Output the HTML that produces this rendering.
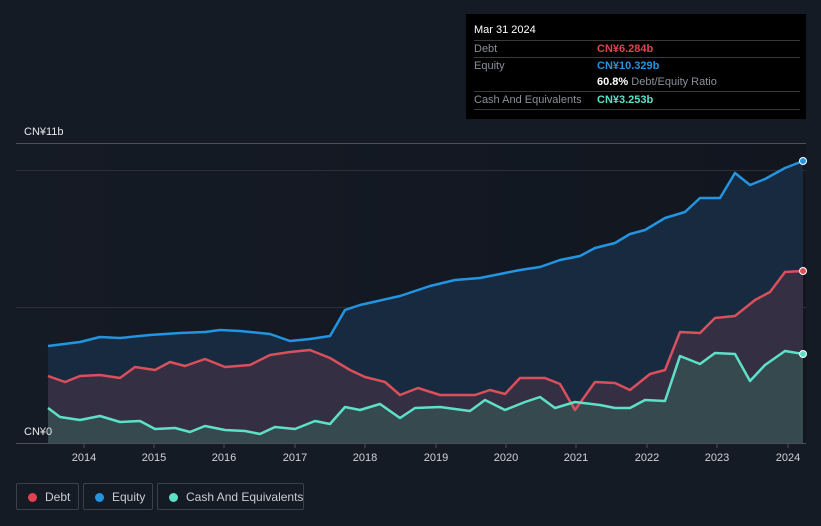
<!DOCTYPE html>
<html><head><meta charset="utf-8"><style>
html,body{margin:0;padding:0;}
body{width:821px;height:526px;background:#151b25;font-family:"Liberation Sans",sans-serif;position:relative;overflow:hidden;}
.tt{position:absolute;left:466px;top:14px;width:340px;height:105px;background:#000;color:#fff;font-size:11px;}
.tt .r{position:absolute;left:8px;right:6px;border-top:1px solid #3a3a3a;height:17px;line-height:17px;}
.lab{color:#8a8f98;}
.val{position:absolute;left:123px;top:0;white-space:nowrap;}
.leg{position:absolute;top:483px;height:27px;border:1px solid #3a404c;border-radius:2px;color:#c9ccd2;font-size:12px;line-height:26px;box-sizing:border-box;white-space:nowrap;}
.dot{position:absolute;top:9px;left:11px;width:9px;height:9px;border-radius:50%;}
</style></head><body>
<svg width="821" height="526" style="position:absolute;left:0;top:0">
<defs><linearGradient id="bg" x1="0" x2="1"><stop offset="0" stop-color="#151b25"/><stop offset="1" stop-color="#11161f"/></linearGradient></defs>
<rect x="16" y="143" width="790" height="300" fill="url(#bg)"/>
<line x1="16" y1="143.5" x2="806" y2="143.5" stroke="#4a4f58"/>
<line x1="16" y1="170.5" x2="806" y2="170.5" stroke="#2a2f38"/>
<line x1="16" y1="307.5" x2="806" y2="307.5" stroke="#2a2f38"/>
<polygon fill="#172a40" points="48,346 80,342 100,337 120,338 150,335 180,333 205,332 220,330 240,331 270,334 290,341 310,339 330,336 345,310 360,305 400,296 430,286 455,280 480,278 500,274 520,270 540,267 560,260 580,256 595,248 615,243 630,234 645,230 665,218 685,212 700,198 720,198 735,173 750,185 765,179 785,168 803,161 803,443 48,443"/>
<polygon fill="#342f42" points="48,376 65,382 80,376 100,375 120,378 135,367 155,370 170,362 185,366 205,359 225,367 250,365 270,355 290,352 310,350 330,358 350,370 365,377 385,382 400,395 418,388 440,395 475,395 490,390 505,394 520,378 545,378 560,384 575,410 595,382 615,383 630,390 650,374 665,370 680,332 700,333 715,318 735,316 755,300 770,292 785,272 803,271 803,443 48,443"/>
<polygon fill="#35494f" points="48,408 60,417 80,420 100,416 120,422 140,421 155,429 175,428 190,432 205,426 225,430 245,431 260,434 275,427 295,429 315,421 330,424 345,407 360,410 380,404 400,418 415,408 440,407 470,411 485,400 505,410 525,402 540,397 555,408 575,402 600,405 615,408 630,408 645,400 665,401 680,356 700,364 715,353 735,354 750,381 765,365 785,351 803,354 803,443 48,443"/>
<g fill="none" stroke-width="2.5" stroke-linejoin="round">
<polyline stroke="#2394e0" points="48,346 80,342 100,337 120,338 150,335 180,333 205,332 220,330 240,331 270,334 290,341 310,339 330,336 345,310 360,305 400,296 430,286 455,280 480,278 500,274 520,270 540,267 560,260 580,256 595,248 615,243 630,234 645,230 665,218 685,212 700,198 720,198 735,173 750,185 765,179 785,168 803,161"/>
<polyline stroke="#d9505c" points="48,376 65,382 80,376 100,375 120,378 135,367 155,370 170,362 185,366 205,359 225,367 250,365 270,355 290,352 310,350 330,358 350,370 365,377 385,382 400,395 418,388 440,395 475,395 490,390 505,394 520,378 545,378 560,384 575,410 595,382 615,383 630,390 650,374 665,370 680,332 700,333 715,318 735,316 755,300 770,292 785,272 803,271"/>
<polyline stroke="#5ee0c8" points="48,408 60,417 80,420 100,416 120,422 140,421 155,429 175,428 190,432 205,426 225,430 245,431 260,434 275,427 295,429 315,421 330,424 345,407 360,410 380,404 400,418 415,408 440,407 470,411 485,400 505,410 525,402 540,397 555,408 575,402 600,405 615,408 630,408 645,400 665,401 680,356 700,364 715,353 735,354 750,381 765,365 785,351 803,354"/>
</g>
<circle cx="803" cy="161" r="3.5" fill="#2394e0" stroke="#fff" stroke-width="1"/>
<circle cx="803" cy="271" r="3.5" fill="#d9505c" stroke="#fff" stroke-width="1"/>
<circle cx="803" cy="354" r="3.5" fill="#5ee0c8" stroke="#fff" stroke-width="1"/>
<line x1="16" y1="443.5" x2="806" y2="443.5" stroke="#4a4f58"/>
<g stroke="#4a4f58">
<line x1="84" y1="443" x2="84" y2="448"/><line x1="154" y1="443" x2="154" y2="448"/><line x1="224" y1="443" x2="224" y2="448"/><line x1="295" y1="443" x2="295" y2="448"/><line x1="365" y1="443" x2="365" y2="448"/><line x1="436" y1="443" x2="436" y2="448"/><line x1="506" y1="443" x2="506" y2="448"/><line x1="576" y1="443" x2="576" y2="448"/><line x1="647" y1="443" x2="647" y2="448"/><line x1="717" y1="443" x2="717" y2="448"/><line x1="788" y1="443" x2="788" y2="448"/>
</g>
<g fill="#d0d3d8" font-size="11" text-anchor="middle" font-family="Liberation Sans, sans-serif">
<text x="84" y="461">2014</text><text x="154" y="461">2015</text><text x="224" y="461">2016</text><text x="295" y="461">2017</text><text x="365" y="461">2018</text><text x="436" y="461">2019</text><text x="506" y="461">2020</text><text x="576" y="461">2021</text><text x="647" y="461">2022</text><text x="717" y="461">2023</text><text x="788" y="461">2024</text>
</g>
<text x="24" y="135" fill="#e6e8eb" font-size="11" font-family="Liberation Sans, sans-serif">CN¥11b</text>
<text x="24" y="435" fill="#e6e8eb" font-size="11" font-family="Liberation Sans, sans-serif">CN¥0</text>
</svg>
<div class="tt">
<div style="position:absolute;left:8px;top:10px;font-size:11px">Mar 31 2024</div>
<div class="r" style="top:26px"><span class="lab">Debt</span><span class="val" style="color:#e0434e;font-weight:bold">CN¥6.284b</span></div>
<div class="r" style="top:43px"><span class="lab">Equity</span><span class="val" style="color:#2394e0;font-weight:bold">CN¥10.329b</span></div>
<div class="r" style="top:60px;border-top:none"><span class="val"><b>60.8%</b> <span class="lab">Debt/Equity Ratio</span></span></div>
<div class="r" style="top:77px"><span class="lab">Cash And Equivalents</span><span class="val" style="color:#5ee0c8;font-weight:bold">CN¥3.253b</span></div>
<div style="position:absolute;left:8px;right:6px;top:95px;border-top:1px solid #3a3a3a"></div>
</div>
<div class="leg" style="left:16px;width:63px"><span class="dot" style="background:#e0434e"></span><span style="position:absolute;left:28px">Debt</span></div>
<div class="leg" style="left:83px;width:70px"><span class="dot" style="background:#2394e0"></span><span style="position:absolute;left:28px">Equity</span></div>
<div class="leg" style="left:157px;width:147px"><span class="dot" style="background:#5ee0c8"></span><span style="position:absolute;left:28px">Cash And Equivalents</span></div>
</body></html>
